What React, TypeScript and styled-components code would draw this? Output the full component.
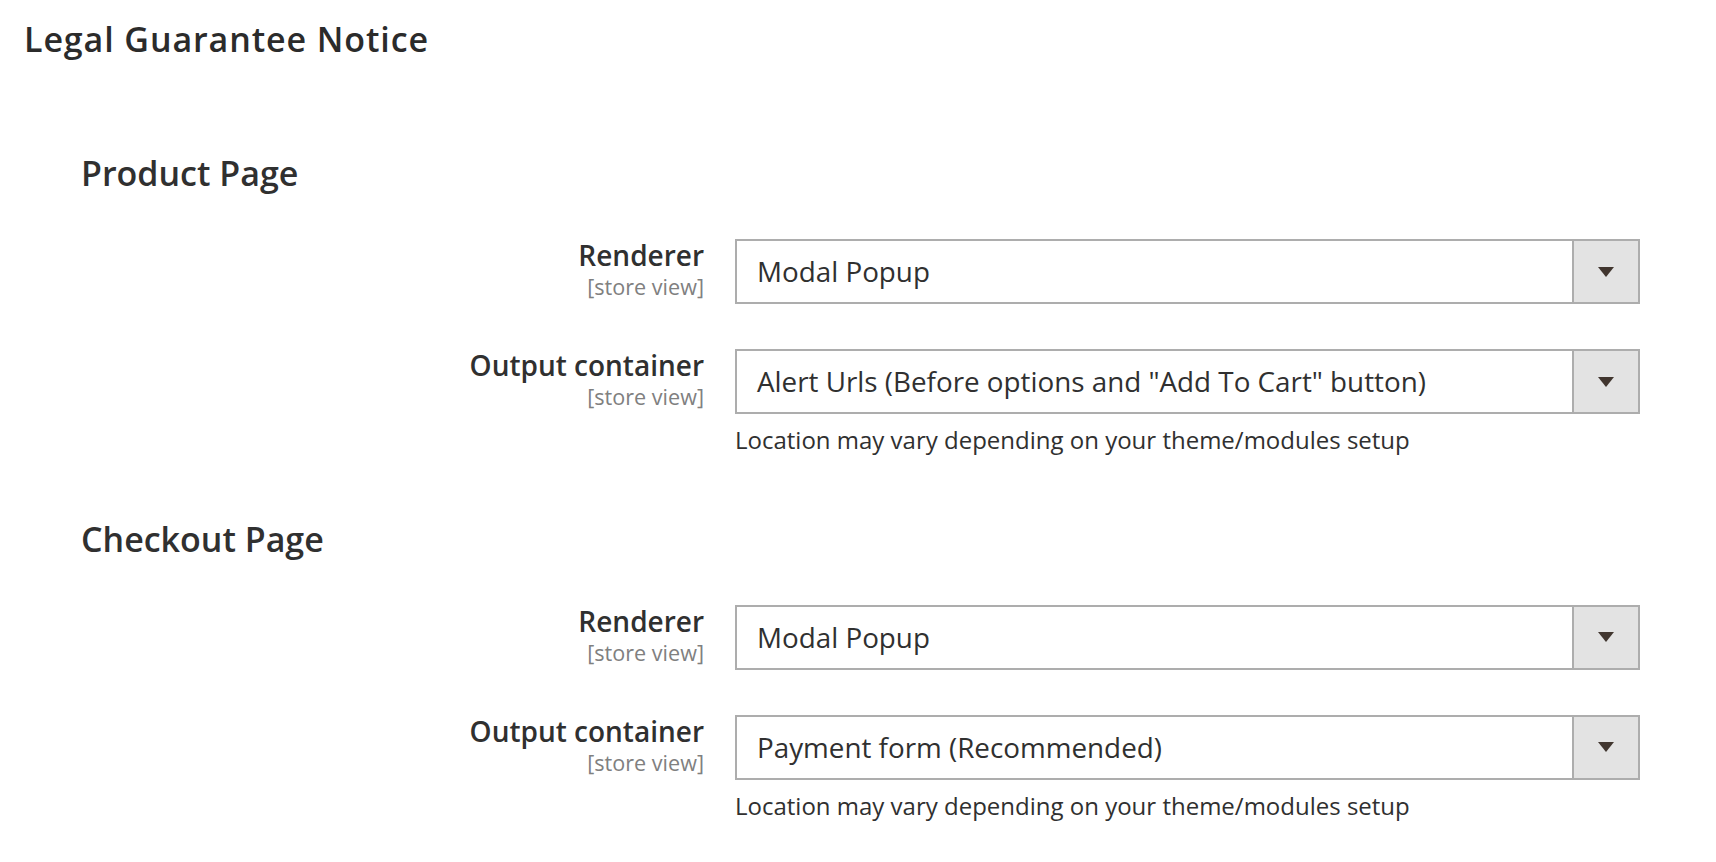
import React from 'react'
import styled, { createGlobalStyle } from 'styled-components'

type Field = {
  label: string
  scope: string
  value: string
  note?: string
}

type Group = {
  title: string
  fields: Field[]
}

const NOTE = 'Location may vary depending on your theme/modules setup'

const groups: Group[] = [
  {
    title: 'Product Page',
    fields: [
      { label: 'Renderer', scope: '[store view]', value: 'Modal Popup' },
      {
        label: 'Output container',
        scope: '[store view]',
        value: 'Alert Urls (Before options and "Add To Cart" button)',
        note: NOTE,
      },
    ],
  },
  {
    title: 'Checkout Page',
    fields: [
      { label: 'Renderer', scope: '[store view]', value: 'Modal Popup' },
      {
        label: 'Output container',
        scope: '[store view]',
        value: 'Payment form (Recommended)',
        note: NOTE,
      },
    ],
  },
]

const App = (): JSX.Element => {
  return (
    <>
      <GlobalStyle />
      <StyledPage>
        <Title>Legal Guarantee Notice</Title>
        {groups.map((group) => (
          <Section key={group.title}>
            <SectionTitle>{group.title}</SectionTitle>
            <Fields>
              {group.fields.map((field) => (
                <FieldRow key={field.label}>
                  <LabelCell>
                    <FieldLabel>{field.label}</FieldLabel>
                    <Scope>{field.scope}</Scope>
                  </LabelCell>
                  <Control>
                    <Select value={field.value} />
                    {field.note && <Note>{field.note}</Note>}
                  </Control>
                </FieldRow>
              ))}
            </Fields>
          </Section>
        ))}
      </StyledPage>
    </>
  )
}

export default App

function Select({ value }: { value: string }): JSX.Element {
  return (
    <StyledSelect role="combobox" aria-expanded={false}>
      <SelectValue>{value}</SelectValue>
      <SelectToggle>
        <Caret />
      </SelectToggle>
    </StyledSelect>
  )
}

// Styling
const GlobalStyle = createGlobalStyle`
  html, body {
    margin: 0;
    padding: 0;
    background: #ffffff;
  }
  body {
    font-family: "Open Sans", "Liberation Sans", sans-serif;
    color: #303030;
  }
`

const StyledPage = styled.div`
  padding: 19px 0 0 24px;
`

const Title = styled.h1`
  margin: 0;
  font-size: 34px;
  line-height: 40px;
  font-weight: 600;
  letter-spacing: 0.9px;
  color: #2b2b2b;
`

const Section = styled.section`
  margin-top: 94px;

  & + & {
    margin-top: 62px;
  }
`

const SectionTitle = styled.h2`
  margin: 0 0 46px 57px;
  font-size: 34px;
  line-height: 40px;
  font-weight: 600;
  color: #303030;
`

const Fields = styled.div`
  display: flex;
  flex-direction: column;
  gap: 45px;
`

const FieldRow = styled.div`
  display: grid;
  grid-template-columns: 680px 905px;
  column-gap: 31px;
`

const LabelCell = styled.div`
  display: flex;
  flex-direction: column;
  align-items: flex-end;
  text-align: right;
`

const FieldLabel = styled.label`
  font-size: 28px;
  line-height: 33px;
  font-weight: 600;
  color: #303030;
`

const Scope = styled.span`
  font-size: 21.6px;
  line-height: 30px;
  color: #808080;
`

const Control = styled.div`
  display: flex;
  flex-direction: column;
`

const StyledSelect = styled.div`
  box-sizing: border-box;
  height: 65px;
  display: flex;
  border: 2px solid #adadad;
  background: #ffffff;
`

const SelectValue = styled.div`
  flex: 1;
  padding-left: 20px;
  font-size: 27.8px;
  line-height: 61px;
  color: #303030;
  white-space: nowrap;
  overflow: hidden;
`

const SelectToggle = styled.div`
  width: 64px;
  border-left: 2px solid #adadad;
  background: #e3e3e3;
  display: flex;
  align-items: center;
  justify-content: center;
`

const Caret = styled.span`
  width: 0;
  height: 0;
  border-style: solid;
  border-width: 10px 8px 0 8px;
  border-color: #41362f transparent transparent transparent;
`

const Note = styled.div`
  margin-top: 9px;
  font-size: 24px;
  line-height: 33.6px;
  color: #303030;
`
